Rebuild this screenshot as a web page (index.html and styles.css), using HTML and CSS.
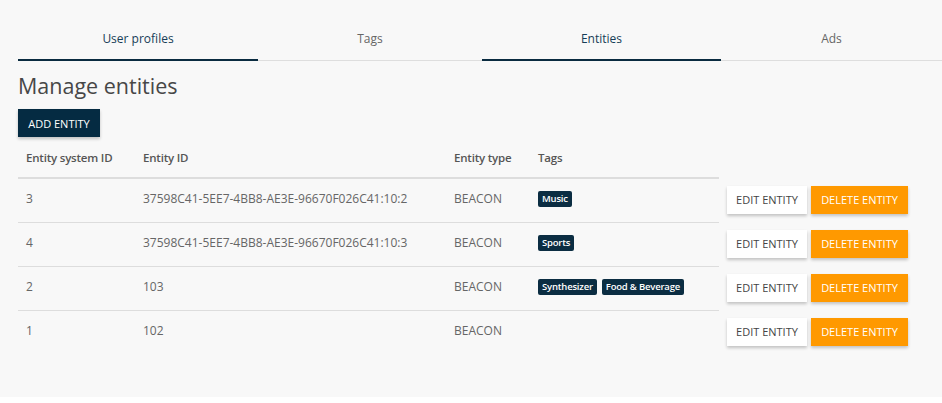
FILE: index.html
```html
<!DOCTYPE html>
<html>
<head>
<meta charset="utf-8">
<link rel="stylesheet" href="styles.css">
</head>
<body>
<div class="page">
  <nav class="tabs">
    <div class="tab active">User profiles</div>
    <div class="tab">Tags</div>
    <div class="tab active">Entities</div>
    <div class="tab">Ads</div>
  </nav>
  <h1 class="title">Manage entities</h1>
  <button class="btn btn-primary">ADD ENTITY</button>
  <table class="grid">
    <colgroup>
      <col class="c1"><col class="c2"><col class="c3"><col class="c4"><col>
    </colgroup>
    <thead>
      <tr>
        <th>Entity system ID</th>
        <th>Entity ID</th>
        <th>Entity type</th>
        <th>Tags</th>
        <th class="act"></th>
      </tr>
    </thead>
    <tbody>
      <tr>
        <td>3</td>
        <td>37598C41-5EE7-4BB8-AE3E-96670F026C41:10:2</td>
        <td>BEACON</td>
        <td><div class="tags"><span class="tag">Music</span></div></td>
        <td class="act"><div class="actions"><button class="btn btn-edit">EDIT ENTITY</button><button class="btn btn-delete">DELETE ENTITY</button></div></td>
      </tr>
      <tr>
        <td>4</td>
        <td>37598C41-5EE7-4BB8-AE3E-96670F026C41:10:3</td>
        <td>BEACON</td>
        <td><div class="tags"><span class="tag">Sports</span></div></td>
        <td class="act"><div class="actions"><button class="btn btn-edit">EDIT ENTITY</button><button class="btn btn-delete">DELETE ENTITY</button></div></td>
      </tr>
      <tr>
        <td>2</td>
        <td>103</td>
        <td>BEACON</td>
        <td><div class="tags"><span class="tag">Synthesizer</span><span class="tag">Food &amp; Beverage</span></div></td>
        <td class="act"><div class="actions"><button class="btn btn-edit">EDIT ENTITY</button><button class="btn btn-delete">DELETE ENTITY</button></div></td>
      </tr>
      <tr>
        <td>1</td>
        <td>102</td>
        <td>BEACON</td>
        <td><div class="tags"></div></td>
        <td class="act"><div class="actions"><button class="btn btn-edit">EDIT ENTITY</button><button class="btn btn-delete">DELETE ENTITY</button></div></td>
      </tr>
    </tbody>
  </table>
</div>
</body>
</html>
```
FILE: styles.css
```css
* { box-sizing: border-box; }
html, body { margin: 0; background: #ffffff; }
body { font-family: "Open Sans", "Noto Sans", sans-serif; color: #666; }

.page {
  background: #f8f8f8;
  height: 397px;
  padding: 20px 0 0 18px;
}

.tabs {
  display: grid;
  grid-template-columns: 240px 224px 239px 1fr;
  border-bottom: 1px solid #dedede;
  height: 41px;
}
.tab {
  font-size: 12px;
  color: #666;
  text-align: center;
  padding-top: 10px;
  height: 40px;
}
.tab.active {
  color: #163d57;
  border-bottom: 2px solid #0a2b40;
  height: 41px;
}

.title {
  margin: 10px 0 0;
  font-size: 21.5px;
  font-weight: 400;
  color: #474747;
  line-height: 30px;
  height: 38px;
}

.btn {
  font-family: inherit;
  border: 0;
  border-radius: 0;
  height: 28px;
  padding: 0;
  font-size: 11px;
  cursor: pointer;
  box-shadow: 0 2px 3px rgba(0,0,0,0.22);
}
.btn-primary { background: #052b42; color: #ffffff; width: 82px; }
.btn-edit { background: #ffffff; color: #444; width: 80px; }
.btn-delete { background: #ff9900; color: #ffffff; width: 97px; }

.grid {
  border-collapse: collapse;
  table-layout: fixed;
  width: 924px;
  font-size: 12px;
}
.c1 { width: 117px; }
.c2 { width: 311px; }
.c3 { width: 84px; }
.c4 { width: 189px; }

th {
  text-align: left;
  font-size: 11.5px;
  letter-spacing: -0.2px;
  font-weight: 600;
  color: #555;
  height: 41px;
  padding: 0 8px;
  border-bottom: 2px solid #dddddd;
  vertical-align: middle;
}
td {
  height: 44px;
  padding: 0 8px 3px;
  border-bottom: 1px solid #dddddd;
  vertical-align: middle;
  color: #666;
  white-space: nowrap;
}
tbody tr:last-child td { border-bottom: 0; }
th.act, td.act { border-bottom: 0; }
td.act { padding: 0 8px 1px; }

.tags { display: flex; gap: 5px; }
.tag {
  background: #0b2d42;
  color: #fff;
  font-size: 9.5px;
  letter-spacing: -0.2px;
  font-weight: 600;
  height: 16px;
  line-height: 16px;
  padding: 0 4px;
  border-radius: 2px;
}

.actions { display: flex; gap: 4px; }
```
